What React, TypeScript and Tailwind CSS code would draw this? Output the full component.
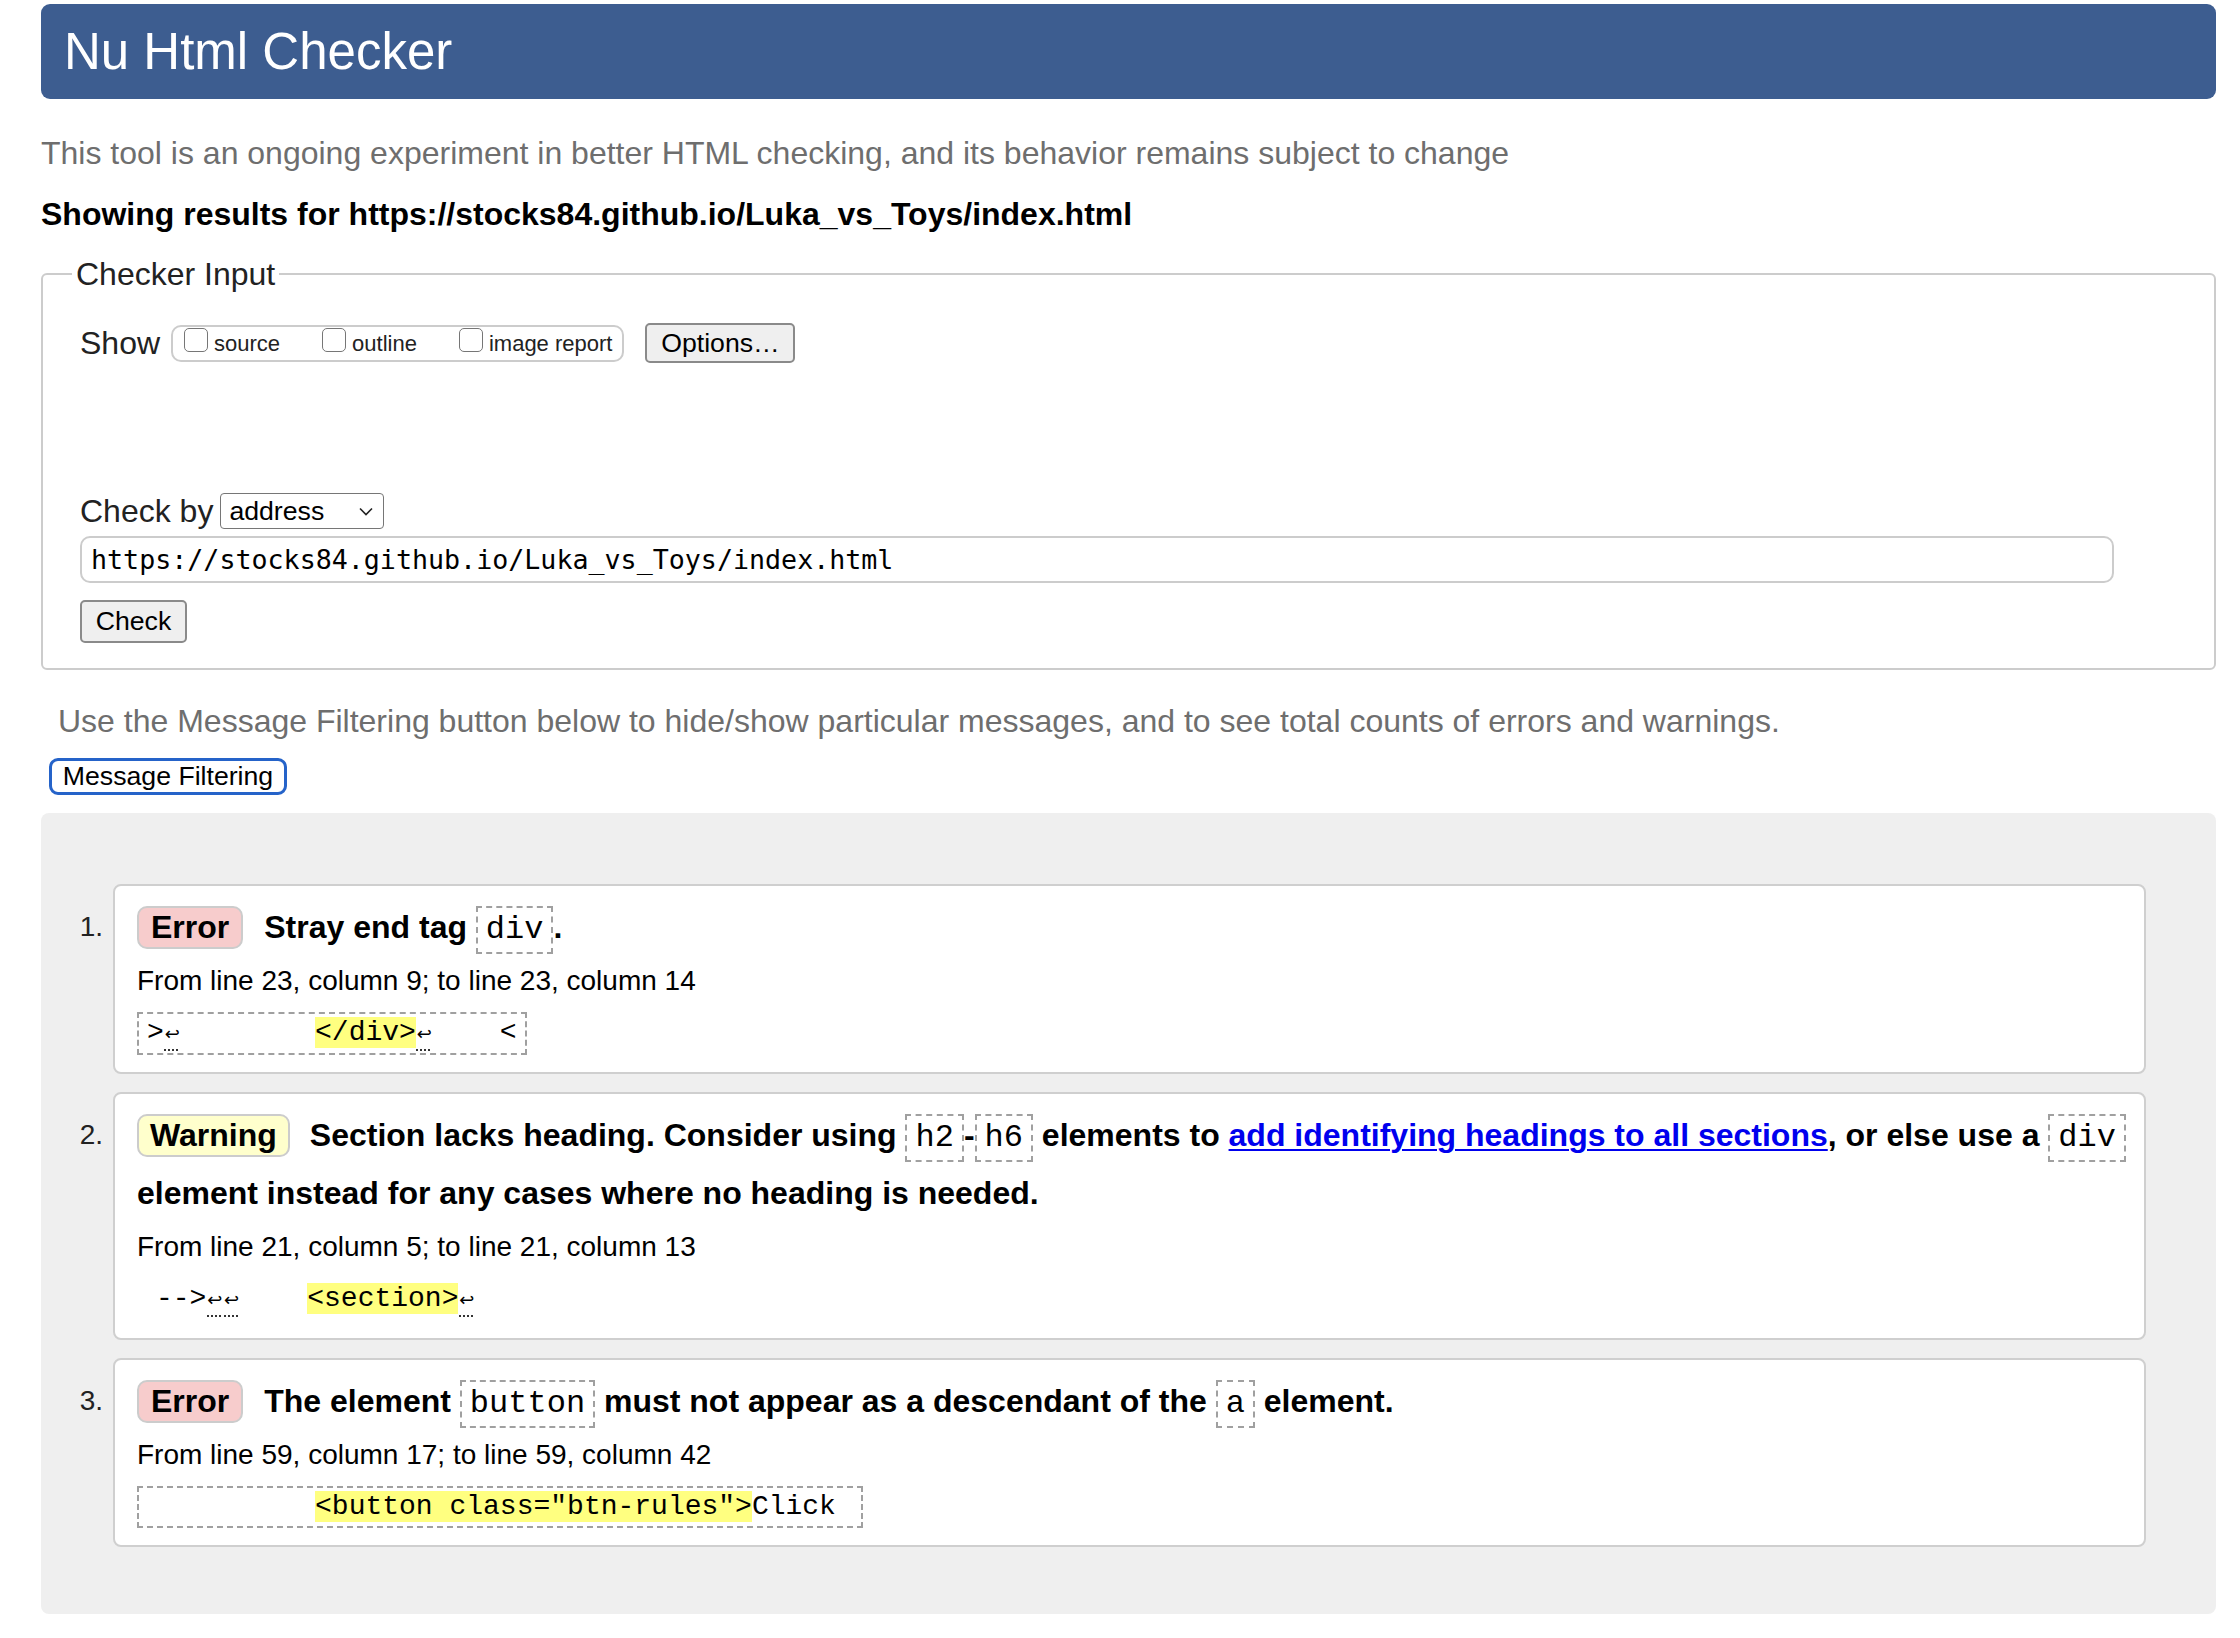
import type { ReactNode } from "react";

const Code = ({ children }: { children: ReactNode }) => (
  <code className="inline-block border-2 border-dashed border-[#a0a0a0] px-[8px] font-['Liberation_Mono',monospace] text-[32px] font-normal leading-[44px]">
    {children}
  </code>
);

const Ret = () => (
  <span className="inline-block w-[16.8px] text-center font-['DejaVu_Sans',sans-serif] text-[18px] underline decoration-[#333] decoration-dotted decoration-2 underline-offset-[9px]">
    ↩
  </span>
);

const Mark = ({ children }: { children: ReactNode }) => (
  <mark className="bg-[#ffff80] text-black">{children}</mark>
);

const Badge = ({ kind }: { kind: "Error" | "Warning" }) => (
  <span
    className={
      kind === "Error"
        ? "mr-[21px] inline-block rounded-[10px] border-2 border-[#cccccc] bg-[#f7cccc] px-[12px] leading-[39px]"
        : "mr-[20px] inline-block rounded-[10px] border-2 border-[#cccccc] bg-[#ffffcc] px-[11px] leading-[39px]"
    }
  >
    {kind}
  </span>
);

const Checkbox = ({ label, first }: { label: string; first?: boolean }) => (
  <label className={first ? "flex items-start" : "ml-[42px] flex items-start"}>
    <span className="mt-[1px] h-[24px] w-[24px] rounded-[5px] border-[1.5px] border-[#767676] bg-white" />
    <span className="ml-[6px] mt-[2px] text-[22px] leading-[30px] text-[#222]">{label}</span>
  </label>
);

type Msg = {
  kind: "Error" | "Warning";
  text: ReactNode;
  from: string;
  extract: ReactNode;
  bordered: boolean;
};

const messages: Msg[] = [
  {
    kind: "Error",
    text: (
      <>
        Stray end tag <Code>div</Code>.
      </>
    ),
    from: "From line 23, column 9; to line 23, column 14",
    extract: (
      <>
        {">"}
        <Ret />
        {"        "}
        <Mark>{"</div>"}</Mark>
        <Ret />
        {"    <"}
      </>
    ),
    bordered: true,
  },
  {
    kind: "Warning",
    text: (
      <>
        <span className="whitespace-nowrap">
          Section lacks heading. Consider using <Code>h2</Code>-<Code>h6</Code> elements to{" "}
          <a href="#" className="text-[#0000ee] underline decoration-2 underline-offset-[3px]">
            add identifying headings to all sections
          </a>
          , or else use a <Code>div</Code>
        </span>
        <br />
        element instead for any cases where no heading is needed.
      </>
    ),
    from: "From line 21, column 5; to line 21, column 13",
    extract: (
      <>
        {"-->"}
        <Ret />
        <Ret />
        {"    "}
        <Mark>{"<section>"}</Mark>
        <Ret />
      </>
    ),
    bordered: false,
  },
  {
    kind: "Error",
    text: (
      <>
        The element <Code>button</Code> must not appear as a descendant of the <Code>a</Code> element.
      </>
    ),
    from: "From line 59, column 17; to line 59, column 42",
    extract: (
      <>
        {"          "}
        <Mark>{'<button class="btn-rules">'}</Mark>
        {"Click "}
      </>
    ),
    bordered: true,
  },
];

export default function App() {
  return (
    <div className="min-h-screen bg-white pb-[24px] pl-[41px] pr-[24px] pt-[4px] font-['Liberation_Sans',Arial,sans-serif] text-black">
      {/* Header */}
      <div className="flex h-[95px] items-center rounded-[9px] bg-[#3d5d90] pl-[23px]">
        <h1 className="text-[51px] leading-none text-white">Nu Html Checker</h1>
      </div>

      <p className="mt-[34px] text-[32px] leading-[40px] text-[#6e6e6e]">
        This tool is an ongoing experiment in better HTML checking, and its behavior remains subject to change
      </p>
      <p className="mt-[21px] text-[32px] font-bold leading-[40px]">
        Showing results for https://stocks84.github.io/Luka_vs_Toys/index.html
      </p>

      {/* Checker input */}
      <fieldset className="mt-[20px] rounded-[6px] border-2 border-[#cccccc] pb-[25px] pl-[37px] pr-[100px] pt-[29px]">
        <legend className="-ml-[8px] px-[4px] text-[32px] leading-[40px] text-[#222]">Checker Input</legend>

        <div className="flex h-[40px] items-center">
          <span className="text-[32px] leading-[40px] text-[#222]">Show</span>
          <div className="ml-[11px] flex h-[37px] items-start rounded-[10px] border-2 border-[#cccccc] pl-[11px] pr-[10px]">
            <Checkbox label="source" first />
            <Checkbox label="outline" />
            <Checkbox label="image report" />
          </div>
          <button className="ml-[21px] h-[40px] w-[150px] rounded-[5px] border-2 border-[#8a8a8a] bg-[#efefef] text-[26.67px] leading-none">
            Options…
          </button>
        </div>

        <div className="mt-[128px] flex h-[40px] items-center">
          <span className="text-[32px] leading-[40px] text-[#222]">Check by</span>
          <div className="ml-[7px] flex h-[36px] w-[164px] items-center justify-between rounded-[4px] border-[1.5px] border-[#767676] bg-white pl-[8px] pr-[10px]">
            <span className="text-[26.67px] leading-none">address</span>
            <svg width="14" height="9" viewBox="0 0 14 9" fill="none">
              <path d="M1 1.5 L7 7.5 L13 1.5" stroke="#222" strokeWidth="1.6" />
            </svg>
          </div>
        </div>

        <div className="mt-[5px] flex h-[47px] w-full items-center rounded-[10px] border-2 border-[#cccccc] pl-[9px] font-['DejaVu_Sans_Mono',monospace] text-[26.67px]">
          https://stocks84.github.io/Luka_vs_Toys/index.html
        </div>

        <button className="mt-[17px] block h-[43px] w-[107px] rounded-[5px] border-2 border-[#8a8a8a] bg-[#efefef] text-[26.67px] leading-none">
          Check
        </button>
      </fieldset>

      <p className="mt-[31px] pl-[17px] text-[32px] leading-[40px] text-[#6e6e6e]">
        Use the Message Filtering button below to hide/show particular messages, and to see total counts of errors and warnings.
      </p>
      <button className="ml-[8px] mt-[17px] block h-[37px] w-[238px] rounded-[9px] border-[3px] border-[#2563c9] bg-white text-[26.67px] leading-none">
        Message Filtering
      </button>

      {/* Results */}
      <div className="mt-[18px] rounded-[8px] bg-[#efefef] pb-[67px] pr-[70px] pt-[71px]">
        <ol className="flex flex-col gap-[18px]">
          {messages.map((m, i) => (
            <li key={i} className="flex">
              <span className="w-[72px] shrink-0 pr-[10px] pt-[14px] text-right text-[28px] leading-[58px] text-[#222]">
                {i + 1}.
              </span>
              <div className="min-w-0 flex-1 rounded-[8px] border-2 border-[#cfcfcf] bg-white pb-[17px] pl-[22px] pr-[8px] pt-[12px]">
                <p className="text-[32px] font-bold leading-[58px]">
                  <Badge kind={m.kind} />
                  {m.text}
                </p>
                <p className="text-[28px] leading-[50px]">{m.from}</p>
                <div
                  className={
                    m.bordered
                      ? "mt-[6px] w-fit whitespace-pre border-2 border-dashed border-[#a0a0a0] px-[8px] font-['Liberation_Mono',monospace] text-[28px] leading-[38px]"
                      : "mt-[6px] w-fit whitespace-pre border-2 border-transparent pl-[17px] pr-[8px] font-['Liberation_Mono',monospace] text-[28px] leading-[38px]"
                  }
                >
                  {m.extract}
                </div>
              </div>
            </li>
          ))}
        </ol>
      </div>
    </div>
  );
}
